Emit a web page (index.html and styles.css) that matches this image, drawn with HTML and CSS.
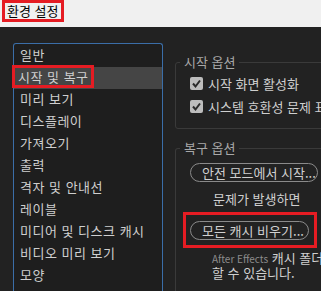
FILE: index.html
```html
<!DOCTYPE html>
<html lang="ko">
<head>
    <meta charset="UTF-8">
    <meta name="viewport" content="width=device-width, initial-scale=1.0">
    <title>환경 설정</title>
    <link rel="stylesheet" href="styles.css">
</head>
<body>
    <!-- Window title -->
    <div class="titlebar">
        <span class="title mark">환경 설정</span>
    </div>

    <div class="main">
        <!-- Category list -->
        <ul class="categories">
            <li>일반</li>
            <li class="selected"><span class="mark item-mark">시작 및 복구</span></li>
            <li>미리 보기</li>
            <li>디스플레이</li>
            <li>가져오기</li>
            <li>출력</li>
            <li>격자 및 안내선</li>
            <li>레이블</li>
            <li>미디어 및 디스크 캐시</li>
            <li>비디오 미리 보기</li>
            <li>모양</li>
        </ul>

        <!-- Settings panel -->
        <div class="panel">
            <fieldset class="group startup">
                <legend>시작 옵션</legend>
                <label class="check"><span class="box"><svg viewBox="0 0 13 13" width="13" height="13"><polyline points="3,6.5 5.5,9.5 10,3.5" fill="none" stroke="#2b2b2b" stroke-width="2"/></svg></span>시작 화면 활성화</label>
                <label class="check"><span class="box"><svg viewBox="0 0 13 13" width="13" height="13"><polyline points="3,6.5 5.5,9.5 10,3.5" fill="none" stroke="#2b2b2b" stroke-width="2"/></svg></span>시스템 호환성 문제 표시</label>
            </fieldset>

            <fieldset class="group recovery">
                <legend>복구 옵션</legend>
                <button class="pill wide">안전 모드에서 시작...</button>
                <p class="note">문제가 발생하면</p>
                <div class="mark button-mark">
                    <button class="pill">모든 캐시 비우기...</button>
                </div>
                <p class="info"><span class="small">After Effects</span> 캐시 폴더<br>할 수 있습니다.</p>
            </fieldset>
        </div>
    </div>
</body>
</html>
```

FILE: styles.css
```css
body {
    font-family: "Noto Sans CJK KR", "Noto Sans", sans-serif;
    font-size: 13px;
    background-color: #222222;
    margin: 0;
    padding: 0;
    width: 321px;
    height: 291px;
    overflow: hidden;
}
.mark {
    border: 3px solid #e51c23;
}
.titlebar {
    height: 27px;
    background-color: #f0f0f0;
    padding-left: 2px;
}
.title {
    display: inline-block;
    color: #000;
    padding: 0 3px 0 2px;
    line-height: 16px;
    font-size: 13px;
}
.main {
    display: flex;
    padding: 16px 0 0 13px;
}
.categories {
    list-style: none;
    margin: 0;
    padding: 1px 0 0;
    width: 148px;
    height: 260px;
    border: 1px solid #3b6ea8;
    border-bottom: none;
    border-radius: 3px 3px 0 0;
    background-color: #1e1e1e;
    flex-shrink: 0;
}
.categories li {
    height: 22px;
    line-height: 20px;
    padding-left: 6px;
    color: #cfcfcf;
    font-size: 13px;
    letter-spacing: 0.5px;
    white-space: nowrap;
}
.categories li.selected {
    background-color: #454545;
    padding-left: 0;
}
.item-mark {
    display: inline-block;
    height: 17px;
    line-height: 17px;
    padding: 0 2px 0 3px;
    margin-left: -2px;
    margin-top: -2px;
}
.panel {
    flex: 1;
    padding-left: 12px;
    margin-top: 11px;
    min-width: 0;
}
.group {
    margin: 0;
    border: 1px solid #3a3a3a;
    border-radius: 3px;
    padding: 2px 0 0 14px;
    width: 170px;
}
.group legend {
    color: #a8a8a8;
    padding: 0 4px;
    margin-left: -10px;
    line-height: 16px;
}
.startup {
    height: 71px;
}
.check {
    display: flex;
    align-items: center;
    height: 23px;
    color: #cfcfcf;
    white-space: nowrap;
}
.box {
    display: flex;
    width: 13px;
    height: 13px;
    border-radius: 2px;
    background-color: #bdbdbd;
    margin-right: 5px;
    flex-shrink: 0;
}
.recovery {
    margin-top: 11px;
    height: 160px;
    border-bottom: none;
}
.pill {
    font-family: inherit;
    font-size: 13px;
    color: #d0d0d0;
    background: transparent;
    border: 1px solid #8a8a8a;
    border-radius: 10px;
    height: 19px;
    line-height: 15px;
    padding: 0 4px 0 11px;
    white-space: nowrap;
    display: block;
}
.pill.wide {
    margin-top: 5px;
    width: 128px;
}
.note {
    margin: 9px 0 0 23px;
    color: #cfcfcf;
    line-height: 16px;
}
.button-mark {
    display: inline-block;
    margin: 5px 0 0 -7px;
    padding: 6px 5px 5px 4px;
}
.info {
    margin: 3px 0 0 22px;
    color: #cfcfcf;
    line-height: 14px;
    white-space: nowrap;
}
.small {
    font-size: 10px;
    color: #8c8c8c;
}
```
